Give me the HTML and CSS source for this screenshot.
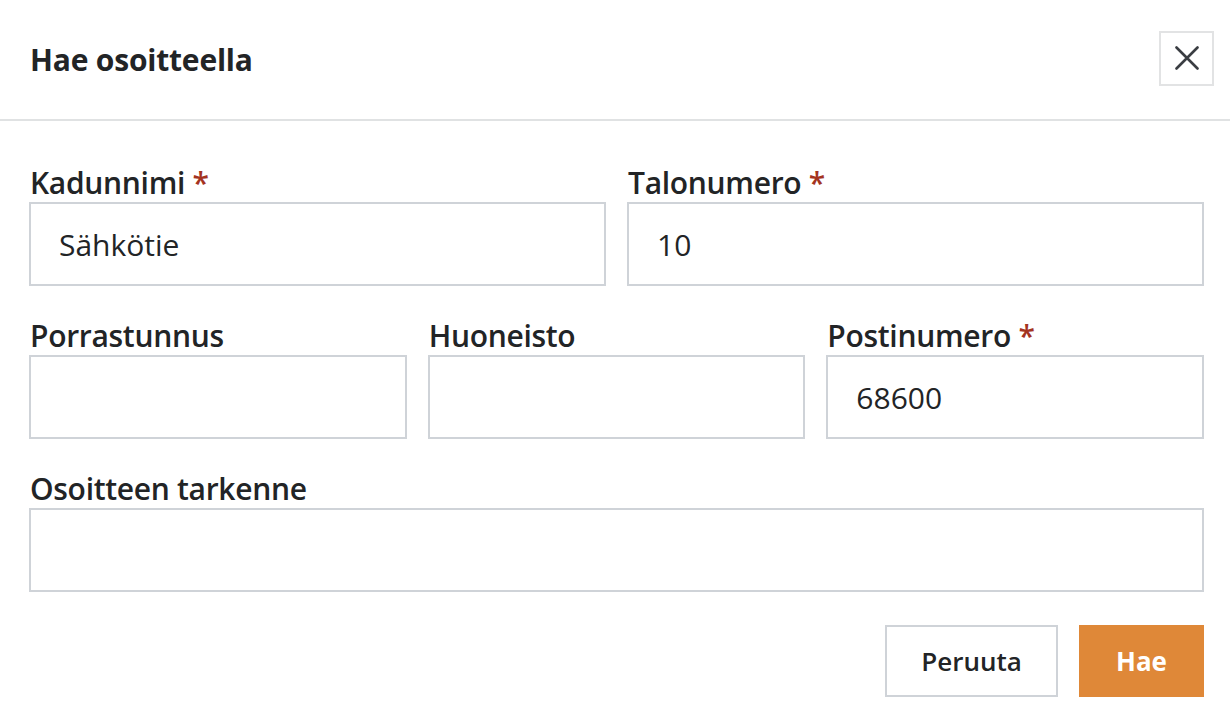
FILE: index.html
```html
<!DOCTYPE html>
<html lang="fi">
<head>
<meta charset="utf-8">
<title>Hae osoitteella</title>
<link rel="stylesheet" href="styles.css">
</head>
<body>
<div class="dialog">
  <header class="dialog-header">
    <h1 class="dialog-title">Hae osoitteella</h1>
    <button class="close-btn" type="button" aria-label="Sulje">
      <svg width="24" height="24" viewBox="0 0 24 24" aria-hidden="true">
        <path d="M1.5 1.5 L22.5 22.5 M22.5 1.5 L1.5 22.5" stroke="#3a3d42" stroke-width="2.6" stroke-linecap="round" fill="none"/>
      </svg>
    </button>
  </header>
  <form class="dialog-body">
    <div class="row row-2">
      <div class="field">
        <label class="label">Kadunnimi <span class="req">*</span></label>
        <input class="input" type="text" value="Sähkötie">
      </div>
      <div class="field">
        <label class="label">Talonumero <span class="req">*</span></label>
        <input class="input" type="text" value="10">
      </div>
    </div>
    <div class="row row-3">
      <div class="field">
        <label class="label">Porrastunnus</label>
        <input class="input" type="text" value="">
      </div>
      <div class="field">
        <label class="label">Huoneisto</label>
        <input class="input" type="text" value="">
      </div>
      <div class="field">
        <label class="label">Postinumero <span class="req">*</span></label>
        <input class="input" type="text" value="68600">
      </div>
    </div>
    <div class="row row-1">
      <div class="field">
        <label class="label">Osoitteen tarkenne</label>
        <input class="input" type="text" value="">
      </div>
    </div>
    <div class="actions">
      <button class="btn btn-secondary" type="button">Peruuta</button>
      <button class="btn btn-primary" type="button">Hae</button>
    </div>
  </form>
</div>
</body>
</html>
```

FILE: styles.css
```css
* { box-sizing: border-box; }
html, body {
  margin: 0;
  padding: 0;
  background: #ffffff;
}
body {
  font-family: "Open Sans", "Noto Sans", "Liberation Sans", sans-serif;
  color: #222426;
}
.dialog {
  width: 1230px;
  height: 728px;
  background: #fff;
}
.dialog-header {
  height: 121px;
  border-bottom: 2px solid #e0e2e3;
  display: flex;
  align-items: center;
  justify-content: space-between;
  padding: 0 16px 0 30px;
}
.dialog-title {
  margin: 0;
  font-size: 30px;
  font-weight: 700;
  letter-spacing: -0.2px;
  color: #222426;
}
.close-btn {
  width: 55px;
  height: 55px;
  border: 2px solid #e2e3e4;
  background: #fff;
  padding: 0;
  display: flex;
  align-items: center;
  justify-content: center;
  margin-top: -3px;
}
.dialog-body {
  padding: 44px 26px 0 29px;
  display: flex;
  flex-direction: column;
  gap: 32px;
}
.row {
  display: grid;
  gap: 21px;
}
.row-2 { grid-template-columns: 1fr 1fr; }
.row-3 { grid-template-columns: 1fr 1fr 1fr; }
.row-1 { grid-template-columns: 1fr; }
.field {
  display: flex;
  flex-direction: column;
  gap: 2px;
}
.label {
  font-size: 30px;
  font-weight: 600;
  line-height: 35px;
  color: #222426;
  padding-left: 1px;
  letter-spacing: -0.3px;
}
.req {
  color: #a4341f;
}
.input {
  height: 84px;
  width: 100%;
  border: 2px solid #cfd3d8;
  background: #fff;
  padding: 0 28px;
  font-family: inherit;
  font-size: 30px;
  color: #222426;
  outline: none;
  border-radius: 0;
}
.actions {
  display: flex;
  justify-content: flex-end;
  gap: 21px;
  margin-top: 1px;
}
.btn {
  height: 72px;
  font-family: inherit;
  font-size: 26px;
  font-weight: 600;
  border-radius: 0;
  padding: 0;
}
.btn-secondary {
  width: 173px;
  background: #fff;
  border: 2px solid #cfd3d8;
  color: #222426;
}
.btn-primary {
  width: 125px;
  background: #df8838;
  border: 2px solid #df8838;
  color: #ffffff;
  font-weight: 700;
}
```
